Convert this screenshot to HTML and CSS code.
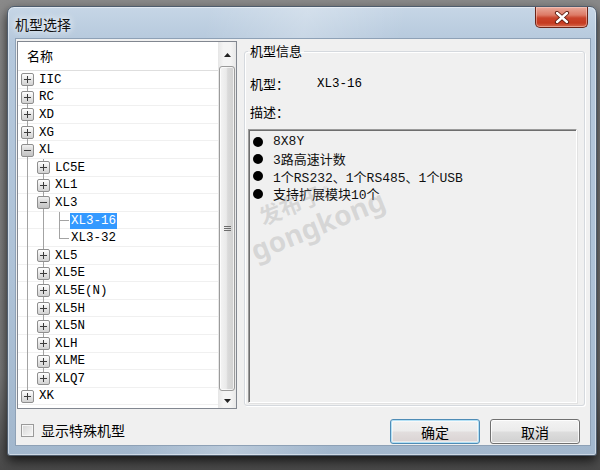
FILE: index.html
```html
<!DOCTYPE html>
<html lang="zh-CN">
<head>
<meta charset="utf-8">
<title>机型选择</title>
<link rel="stylesheet" href="styles.css">
</head>
<body>
<div class="window">
  <div class="titlebar">
    <span class="title">机型选择</span>
    <button class="close" aria-label="关闭">
      <svg width="16" height="13" viewBox="0 0 16 13">
        <path d="M3 2 L13 11 M13 2 L3 11" stroke="#5a1a10" stroke-width="4.2" stroke-linecap="round"/>
        <path d="M3 2 L13 11 M13 2 L3 11" stroke="#ffffff" stroke-width="2.4" stroke-linecap="round"/>
      </svg>
    </button>
  </div>
  <div class="client">
    <div class="main">
      <div class="tree">
        <div class="tree-view">
          <div class="tree-head">名称</div>
          <div class="tree-rows">
            <div class="row"><span class="c vd"><span class="bx plus"></span></span><span class="lbl">IIC</span></div>
            <div class="row"><span class="c v"><span class="bx plus"></span></span><span class="lbl">RC</span></div>
            <div class="row"><span class="c v"><span class="bx plus"></span></span><span class="lbl">XD</span></div>
            <div class="row"><span class="c v"><span class="bx plus"></span></span><span class="lbl">XG</span></div>
            <div class="row"><span class="c v"><span class="bx minus"></span></span><span class="lbl">XL</span></div>
            <div class="row"><span class="c v"></span><span class="c v"><span class="bx plus"></span></span><span class="lbl">LC5E</span></div>
            <div class="row"><span class="c v"></span><span class="c v"><span class="bx plus"></span></span><span class="lbl">XL1</span></div>
            <div class="row"><span class="c v"></span><span class="c v"><span class="bx minus"></span></span><span class="lbl">XL3</span></div>
            <div class="row"><span class="c v"></span><span class="c v"></span><span class="c tee"></span><span class="lbl sel">XL3-16</span></div>
            <div class="row"><span class="c v"></span><span class="c v"></span><span class="c elb"></span><span class="lbl">XL3-32</span></div>
            <div class="row"><span class="c v"></span><span class="c v"><span class="bx plus"></span></span><span class="lbl">XL5</span></div>
            <div class="row"><span class="c v"></span><span class="c v"><span class="bx plus"></span></span><span class="lbl">XL5E</span></div>
            <div class="row"><span class="c v"></span><span class="c v"><span class="bx plus"></span></span><span class="lbl">XL5E(N)</span></div>
            <div class="row"><span class="c v"></span><span class="c v"><span class="bx plus"></span></span><span class="lbl">XL5H</span></div>
            <div class="row"><span class="c v"></span><span class="c v"><span class="bx plus"></span></span><span class="lbl">XL5N</span></div>
            <div class="row"><span class="c v"></span><span class="c v"><span class="bx plus"></span></span><span class="lbl">XLH</span></div>
            <div class="row"><span class="c v"></span><span class="c v"><span class="bx plus"></span></span><span class="lbl">XLME</span></div>
            <div class="row"><span class="c v"></span><span class="c vu"><span class="bx plus"></span></span><span class="lbl">XLQ7</span></div>
            <div class="row"><span class="c vu"><span class="bx plus"></span></span><span class="lbl">XK</span></div>
          </div>
        </div>
        <div class="scrollbar">
          <div class="sb-btn sb-up">
            <svg width="7" height="4" viewBox="0 0 7 4"><path d="M0 4 L3.5 0 L7 4 Z" fill="#222"/></svg>
          </div>
          <div class="sb-track">
            <div class="sb-thumb">
              <svg width="7" height="7" viewBox="0 0 7 7"><path d="M0 1.5 H7 M0 3.5 H7 M0 5.5 H7" stroke="#6e6e6e" stroke-width="1"/></svg>
            </div>
          </div>
          <div class="sb-btn sb-down">
            <svg width="7" height="4" viewBox="0 0 7 4"><path d="M0 0 L3.5 4 L7 0 Z" fill="#222"/></svg>
          </div>
        </div>
      </div>
      <fieldset class="info">
        <legend>机型信息</legend>
        <div class="field field-model"><span class="field-label">机型：</span><span class="mono">XL3-16</span></div>
        <div class="field field-desc">描述：</div>
        <ul class="desc">
          <li><span class="dot"></span><span>8X8Y</span></li>
          <li><span class="dot"></span><span>3路高速计数</span></li>
          <li><span class="dot"></span><span>1个RS232、1个RS485、1个USB</span></li>
          <li><span class="dot"></span><span>支持扩展模块10个</span></li>
        </ul>
      </fieldset>
    </div>
    <div class="footer">
      <label class="check"><span class="check-box"></span>显示特殊机型</label>
      <div class="buttons">
        <button class="btn btn-default">确定</button>
        <button class="btn">取消</button>
      </div>
    </div>
  </div>
</div>
<div class="watermark"><span class="wm-cn">发布于</span><span class="wm-r">®</span><br><span class="wm-en">gongkong</span></div>
</body>
</html>
```

FILE: styles.css
```css
html, body {
  margin: 0;
  padding: 0;
}
body {
  width: 600px;
  height: 470px;
  overflow: hidden;
  background: linear-gradient(180deg, #8a8a8a 0%, #7a7a7a 80%, #4a4a4a 100%);
  font-family: "Noto Sans CJK SC", "Noto Sans", sans-serif;
  position: relative;
  padding: 6px 3px 0 7px;
  box-sizing: border-box;
}

.window {
  width: 590px;
  height: 450px;
  box-sizing: border-box;
  border: 1px solid #4f5d6d;
  border-radius: 7px 7px 3px 3px;
  background:
    linear-gradient(100deg, rgba(255,255,255,0) 30%, rgba(255,255,255,.25) 45%, rgba(255,255,255,0) 60%),
    linear-gradient(180deg, #c6d6e6 0%, #b5c8dc 8%, #aec2d7 60%, #a2b7cd 100%);
  box-shadow: 0 5px 12px rgba(0,0,0,.75), inset 0 0 0 1px rgba(255,255,255,.45);
  display: flex;
  flex-direction: column;
}

.titlebar {
  height: 31px;
  flex: none;
  display: flex;
  align-items: flex-start;
  justify-content: space-between;
  padding: 0 8px 0 7px;
}
.title {
  font-size: 14px;
  line-height: 16px;
  margin-top: 9px;
  color: #111;
  text-shadow: 0 0 6px rgba(255,255,255,.9), 0 0 10px rgba(255,255,255,.7);
}
.close {
  width: 53px;
  height: 21px;
  padding: 0;
  margin: 0;
  border: 1px solid #6b2418;
  border-top: none;
  border-radius: 0 0 5px 5px;
  background: linear-gradient(180deg, #e9a99b 0%, #dd7a66 40%, #c9432b 55%, #c53a20 80%, #d76a4e 100%);
  box-shadow: inset 0 0 0 1px rgba(255,220,210,.45);
  display: flex;
  align-items: center;
  justify-content: center;
}

.client {
  flex: 1;
  margin: 0 5px 9px 7px;
  border: 1px solid #8ea1b6;
  background: #f0f0f0;
  display: flex;
  flex-direction: column;
  padding: 2px 5px 0 1px;
}

.main {
  display: flex;
  align-items: flex-start;
}

/* tree */
.tree {
  width: 220px;
  height: 368px;
  box-sizing: border-box;
  border: 1px solid #828790;
  background: #fff;
  display: flex;
  flex: none;
}
.tree-view {
  flex: 1;
  display: flex;
  flex-direction: column;
  min-width: 0;
}
.tree-head {
  height: 29px;
  box-sizing: border-box;
  border-bottom: 1px solid #dedede;
  padding-left: 9px;
  font-size: 13px;
  line-height: 28px;
  color: #000;
}
.tree-rows {
  display: flex;
  flex-direction: column;
}
.row {
  height: 17.6px;
  display: flex;
  align-items: stretch;
  padding-left: 3px;
  box-shadow: inset 0 -1px #f0f0f0;
}
.c {
  width: 16px;
  flex: none;
  display: flex;
  align-items: center;
  background-repeat: no-repeat;
}
.c.v { background-image: linear-gradient(#a3a3a3, #a3a3a3); background-position: 6px 0; background-size: 1px 100%; }
.c.vd { background-image: linear-gradient(#a3a3a3, #a3a3a3); background-position: 6px 100%; background-size: 1px 50%; }
.c.vu { background-image: linear-gradient(#a3a3a3, #a3a3a3); background-position: 6px 0; background-size: 1px 50%; }
.c.tee {
  background-image: linear-gradient(#a3a3a3, #a3a3a3), linear-gradient(#a3a3a3, #a3a3a3);
  background-position: 6px 0, 6px 50%;
  background-size: 1px 100%, 10px 1px;
}
.c.elb {
  background-image: linear-gradient(#a3a3a3, #a3a3a3), linear-gradient(#a3a3a3, #a3a3a3);
  background-position: 6px 0, 6px 50%;
  background-size: 1px 50%, 10px 1px;
}
.bx {
  width: 13px;
  height: 13px;
  box-sizing: border-box;
  border: 1px solid #8f8f8f;
  border-radius: 2px;
  background-repeat: no-repeat;
}
.bx.plus {
  background-image:
    linear-gradient(#3c3c3c, #3c3c3c),
    linear-gradient(#3c3c3c, #3c3c3c),
    linear-gradient(180deg, #ffffff, #e6e6e6 50%, #d2d2d2);
  background-position: 2px 5px, 5px 2px, 0 0;
  background-size: 7px 1px, 1px 7px, 100% 100%;
}
.bx.minus {
  background-image:
    linear-gradient(#3c3c3c, #3c3c3c),
    linear-gradient(180deg, #f2f2f2, #d6d6d6 50%, #c2c2c2);
  background-position: 2px 5px, 0 0;
  background-size: 7px 1px, 100% 100%;
}
.lbl {
  align-self: center;
  margin-left: 1px;
  padding: 0 1px;
  font-family: "Liberation Mono", "Noto Sans CJK SC", monospace;
  font-size: 12.5px;
  line-height: 16px;
  color: #000;
  white-space: nowrap;
}
.lbl.sel {
  background: #3399ff;
  color: #fff;
}

/* scrollbar */
.scrollbar {
  width: 18px;
  flex: none;
  display: flex;
  flex-direction: column;
  background: linear-gradient(90deg, #e6e6e6 0%, #f4f4f4 30%, #f4f4f4 70%, #e8e8e8 100%);
}
.sb-btn {
  flex: none;
  display: flex;
  align-items: center;
  justify-content: center;
}
.sb-up { height: 24px; padding-top: 1px; box-sizing: border-box; }
.sb-down { height: 17px; padding-top: 2px; box-sizing: border-box; }
.sb-track {
  flex: 1;
  display: flex;
  padding: 0 1px;
}
.sb-thumb {
  flex: 1;
  box-sizing: border-box;
  border: 1px solid #9b9b9b;
  border-radius: 3px;
  background: linear-gradient(90deg, #f4f4f4 0%, #eaeaea 45%, #dadada 55%, #d0d0d0 100%);
  box-shadow: inset 0 0 0 1px rgba(255,255,255,.7);
  display: flex;
  align-items: center;
  justify-content: center;
}

/* info group */
.info {
  margin: 1px 0 0 7px;
  padding: 0 8px 0 5px;
  width: 343px;
  height: 364px;
  box-sizing: border-box;
  border: 1px solid #d5d9de;
  border-radius: 3px;
  box-shadow: inset 1px 1px 0 #fff, 1px 1px 0 #fff;
  min-inline-size: 0;
}
.info legend {
  margin-left: -2px;
  padding: 0 2px;
  font-size: 13px;
  line-height: 18px;
  color: #000;
}
.field {
  font-size: 13px;
  line-height: 18px;
  color: #000;
  display: flex;
}
.field-model { margin-top: 15px; }
.field-desc { margin-top: 10px; }
.field-label { width: 67px; flex: none; }
.mono {
  font-family: "Liberation Mono", monospace;
  font-size: 12.5px;
}
.desc {
  list-style: none;
  margin: 8px 0 0 -2px;
  padding: 3px 0 0 0;
  width: 329px;
  height: 274px;
  box-sizing: border-box;
  border: 1px solid;
  border-color: #9b9b9b #ffffff #ffffff #9b9b9b;
  box-shadow: inset 1px 1px 0 #6e6e6e, 1px 1px 0 #e2e2e2;
}
.desc li {
  display: flex;
  align-items: center;
  height: 17.3px;
  font-family: "Liberation Mono", "Noto Sans CJK SC", monospace;
  font-size: 13px;
  color: #111;
  white-space: nowrap;
}
.dot {
  width: 10px;
  height: 10px;
  border-radius: 50%;
  background: #000;
  margin: 0 10px 0 4px;
  flex: none;
}

/* footer */
.footer {
  flex: 1;
  display: flex;
  align-items: flex-start;
  justify-content: space-between;
  padding: 10px 5px 0 4px;
}
.check {
  display: flex;
  align-items: center;
  margin-top: 2px;
  font-size: 14px;
  line-height: 18px;
  color: #000;
}
.check-box {
  width: 13px;
  height: 13px;
  box-sizing: border-box;
  border: 1px solid #9a9a9a;
  background: linear-gradient(135deg, #d5d5d5, #f8f8f8);
  box-shadow: inset 0 0 0 1px #f6f6f6;
  margin-right: 7px;
}
.buttons {
  display: flex;
  gap: 10px;
}
.btn {
  width: 90px;
  height: 25px;
  margin: 0;
  padding: 0;
  box-sizing: border-box;
  border: 1px solid #707070;
  border-radius: 3px;
  background: linear-gradient(180deg, #f3f3f3 0%, #ebebeb 48%, #dddddd 52%, #d0d0d0 100%);
  box-shadow: inset 0 0 0 1px rgba(255,255,255,.8);
  font-family: "Noto Sans CJK SC", sans-serif;
  font-size: 14px;
  line-height: 20px;
  color: #000;
}
.btn-default {
  border-color: #4f8cb6;
  background: linear-gradient(180deg, #f2f2f2 0%, #ececec 48%, #e2dede 52%, #d9d2d2 100%);
  box-shadow: inset 0 0 0 1px #b3e0f5, inset 0 0 0 2px rgba(255,255,255,.5);
}

/* watermark overlay */
.watermark {
  position: absolute;
  left: 236px;
  top: 212px;
  transform: rotate(-22deg);
  transform-origin: 0 0;
  color: rgba(150,150,150,.28);
  font-family: "Noto Sans CJK SC", sans-serif;
  font-weight: 700;
  line-height: 26px;
  pointer-events: none;
}
.wm-cn { font-size: 22px; margin-left: 20px; }
.wm-r { font-size: 11px; vertical-align: top; margin-left: 3px; }
.wm-en { font-size: 28px; font-family: "Noto Sans", sans-serif; }
```
